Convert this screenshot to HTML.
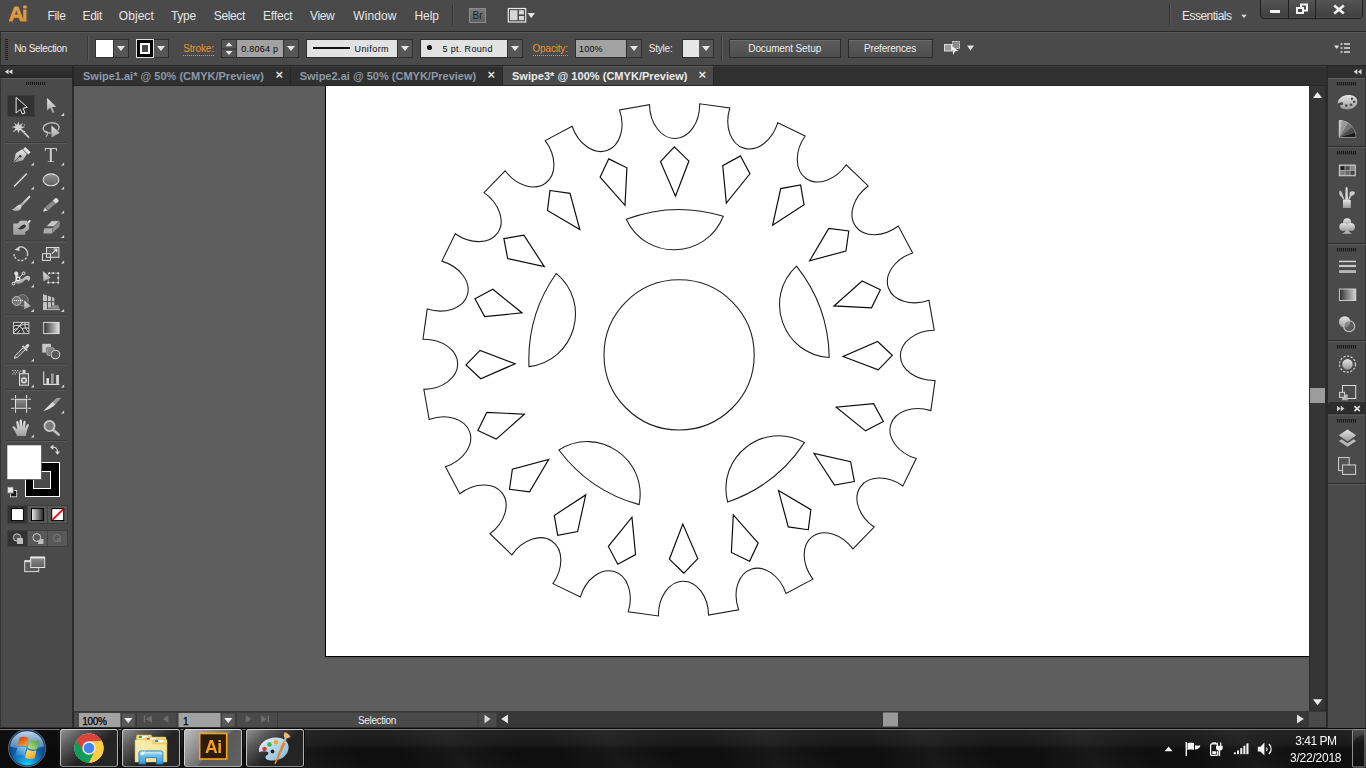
<!DOCTYPE html>
<html lang="en"><head><meta charset="utf-8"><title>Swipe3* @ 100% (CMYK/Preview) - Adobe Illustrator</title>
<style>

*{box-sizing:border-box;margin:0;padding:0}
html,body{width:1366px;height:768px;overflow:hidden;background:#4a4a4a;font-family:"Liberation Sans",sans-serif;}
#app{position:relative;width:1366px;height:768px;overflow:hidden;background:#4a4a4a;color:#dcdcdc;font-size:12px}
.abs{position:absolute}
.t{position:absolute;white-space:nowrap;line-height:1}
#menubar{position:absolute;left:0;top:0;width:1366px;height:31px;background:#4a4a4a}
#menubar .m{font-size:12px;color:#e6e6e6}
#ctrl{position:absolute;left:0;top:31px;width:1366px;height:35px;background:#4a4a4a;border-top:1px solid #282828;border-bottom:1px solid #262626;box-shadow:inset 0 1px 0 #5a5a5a}
#ctrl .t{font-size:10px;color:#ececec}
#ctrl .o{color:#ea962c;border-bottom:1px dotted #ea962c;padding-bottom:1px}
.dd{position:absolute;top:7px;height:19px;width:15px;background:#565656;border:1px solid #2e2e2e;border-left:none}
.dd:after{content:"";position:absolute;left:3px;top:6px;border:4px solid transparent;border-top:5px solid #e4e4e4;border-bottom:none}
.fld{position:absolute;top:7px;height:19px;border:1px solid #2e2e2e;background:#a2a2a2}
.btn{position:absolute;top:7px;height:19px;border:1px solid #2c2c2c;background:linear-gradient(#5c5c5c,#4e4e4e);box-shadow:inset 0 1px 0 #6c6c6c}
#tabs{position:absolute;left:0;top:66px;width:1366px;height:20px;background:#303030;border-bottom:1px solid #262626;box-shadow:inset 0 1px 0 #3d3d3d}
.tab{position:absolute;top:0;height:19px;background:#303030;border-top:1px solid #3d3d3d;border-right:1px solid #262626;font-size:11px;font-weight:bold;color:#8d99a9}
.tab.act{background:#4a4a4a;border-top-color:#5a5a5a;color:#ececec}
#tools{position:absolute;left:0;top:86px;width:74px;height:642px;border-bottom:1px solid #2c2c2c;background:#4a4a4a;border-right:2px solid #2c2c2c;border-left:1px solid #333}
#canvas{position:absolute;left:74px;top:86px;width:1235px;height:625px;background:#5e5e5e;overflow:hidden}
#vscroll{position:absolute;left:1309px;top:86px;width:17px;height:625px;background:#353535;border-right:1px solid #2c2c2c;border-left:1px solid #2a2a2a}
#right{position:absolute;left:1326px;top:66px;width:40px;height:662px;background:#4a4a4a}
#status{position:absolute;left:74px;top:711px;width:1252px;height:17px;background:#4a4a4a}
#taskbar{position:absolute;left:0;top:728px;width:1366px;height:40px;background:repeating-linear-gradient(62deg,rgba(255,255,255,.04) -10px,rgba(255,255,255,.02) 15px,rgba(255,255,255,0) 45px,rgba(255,255,255,0) 80px,rgba(255,255,255,.04) 130px),linear-gradient(#222 0,#1a1a1a 40%,#0e0e0e 55%,#101010 100%)}

</style></head>
<body>
<div id="app">

<div id="menubar">
<span class="t" style="left:8.8px;top:3px;letter-spacing:-1.700px;font-size:21px;font-weight:bold;background:linear-gradient(#d6a660 20%,#ea9226 85%);-webkit-background-clip:text;background-clip:text;color:transparent;-webkit-text-stroke:.55px #dd9a40">Ai</span>
<span class="t m" style="left:47.5px;top:10px;letter-spacing:-0.336px;">File</span>
<span class="t m" style="left:82.5px;top:10px;letter-spacing:-0.297px;">Edit</span>
<span class="t m" style="left:118.8px;top:10px;letter-spacing:0.052px;">Object</span>
<span class="t m" style="left:171px;top:10px;letter-spacing:-0.304px;">Type</span>
<span class="t m" style="left:213.8px;top:10px;letter-spacing:-0.360px;">Select</span>
<span class="t m" style="left:263px;top:10px;letter-spacing:-0.161px;">Effect</span>
<span class="t m" style="left:310px;top:10px;letter-spacing:-0.374px;">View</span>
<span class="t m" style="left:353.3px;top:10px;letter-spacing:0.085px;">Window</span>
<span class="t m" style="left:414.5px;top:10px;letter-spacing:-0.097px;">Help</span>
<div class="abs" style="left:452px;top:5px;width:2px;height:20px;background:#343434;border-right:1px solid #585858"></div>
<div class="abs" style="left:469px;top:8px;width:17px;height:15px;background:linear-gradient(#7c7c7c,#5e5e5e);border:1px solid #8c8c8c"><span class="t" style="left:2.5px;top:2px;letter-spacing:0.000px;font-size:10px;color:#222">Br</span></div>
<svg class="abs" style="left:507px;top:7px" width="30" height="17" viewBox="0 0 30 17"><rect x="1.300" y="1.500" width="17.400" height="13.500" fill="#4a4a4a" stroke="#e8e8e8" stroke-width="1.200"/><rect x="3" y="3.200" width="7.500" height="10" fill="#d8d8d8"/><rect x="12" y="3.200" width="5" height="4.200" fill="#d8d8d8"/><rect x="12" y="9" width="5" height="4.200" fill="#d8d8d8"/><path d="M20.500 6h7.400l-3.700 5z" fill="#e8e8e8"/></svg>
<div class="abs" style="left:1169px;top:4px;width:2px;height:21px;background:#343434;border-right:1px solid #585858"></div>
<span class="t m" style="left:1182px;top:9.5px;letter-spacing:-0.520px;">Essentials</span>
<svg class="abs" style="left:1240px;top:14px" width="8" height="5"><path d="M1.300 .8h5.400l-2.700 3.200z" fill="#dcdcdc"/></svg>
<div class="abs" style="left:1260px;top:-1px;width:103px;height:20px;background:linear-gradient(#545454,#3e3e3e);border:1px solid #1e1e1e;border-radius:0 0 4px 4px;box-shadow:inset 0 -1px 0 #4e4e4e"></div>
<div class="abs" style="left:1288px;top:0;width:1px;height:18px;background:#222"></div>
<div class="abs" style="left:1315px;top:0;width:1px;height:18px;background:#222"></div>
<div class="abs" style="left:1270px;top:10px;width:10px;height:3px;background:#f2f2f2"></div>
<svg class="abs" style="left:1295px;top:3px" width="14" height="12" viewBox="1295 3 14 12"><rect x="1301" y="4.500" width="6" height="6" fill="none" stroke="#f2f2f2" stroke-width="2"/><rect x="1297" y="8" width="6" height="5" fill="#464646" stroke="#f2f2f2" stroke-width="2"/></svg>
<svg class="abs" style="left:1332px;top:4px" width="14" height="11" viewBox="0 0 14 11"><path d="M2.200 1.500l9.600 8M11.800 1.500l-9.600 8" stroke="#f2f2f2" stroke-width="2.600" fill="none"/></svg>
</div>


<div id="ctrl"><div class="abs" style="left:0;top:0;width:1px;height:33px;background:#2e2e2e"></div>
<div class="abs" style="left:5px;top:7px;width:3px;height:21px;background:repeating-linear-gradient(#1e1e1e 0,#1e1e1e 1px,transparent 1px,transparent 2px)"></div>
<span class="t" style="left:14.2px;top:12px;letter-spacing:-0.325px;">No Selection</span>
<div class="abs" style="left:87px;top:4px;width:2px;height:25px;background:#3a3a3a;border-right:1px solid #5a5a5a"></div>
<div class="abs" style="left:95px;top:7px;width:19px;height:19px;background:#fff;border:1px solid #333"></div>
<div class="dd" style="left:114px"></div>
<div class="abs" style="left:136px;top:7px;width:18px;height:19px;background:#000;border:1px solid #e0e0e0"><div class="abs" style="left:3px;top:3px;width:10px;height:11px;border:2px solid #fff;background:#4a4a4a"></div></div>
<div class="dd" style="left:154px"></div>
<span class="t o" style="left:183.2px;top:12px;letter-spacing:-0.155px;">Stroke:</span>
<div class="abs" style="left:221px;top:7px;width:16px;height:19px;background:#565656;border:1px solid #2e2e2e"></div>
<svg class="abs" style="left:221px;top:7.500px" width="16" height="18"><path d="M4.600 6.300L8 2.300l3.400 4zM4.600 11L8 15l3.400-4z" fill="#e8e8e8"/><path d="M1 9h14" stroke="#2e2e2e" stroke-width=".9"/></svg>
<div class="fld" style="left:236px;width:48px"><span class="t" style="left:4.3px;top:4.5px;letter-spacing:0.244px;color:#0a0a0a;font-size:9px">0.8064 p</span></div>
<div class="dd" style="left:284px"></div>
<div class="fld" style="left:306px;width:92px;background:#e2e2e2"><div class="abs" style="left:6px;top:7px;width:37px;height:2px;background:#111"></div><span class="t" style="left:47.5px;top:4.5px;letter-spacing:0.426px;color:#0a0a0a;font-size:9px">Uniform</span></div>
<div class="dd" style="left:398px"></div>
<div class="fld" style="left:420px;width:88px;background:#e2e2e2"><div class="abs" style="left:6px;top:5px;width:5px;height:5px;border-radius:50%;background:#111"></div><span class="t" style="left:21.5px;top:4.5px;letter-spacing:0.341px;color:#0a0a0a;font-size:9px">5 pt. Round</span></div>
<div class="dd" style="left:508px"></div>
<span class="t o" style="left:532.5px;top:12px;letter-spacing:-0.173px;">Opacity:</span>
<div class="fld" style="left:575px;width:52px"><span class="t" style="left:3px;top:4.5px;letter-spacing:0.192px;color:#0a0a0a;font-size:9px">100%</span></div>
<div class="dd" style="left:627px"></div>
<span class="t" style="left:648.8px;top:12px;letter-spacing:-0.219px;">Style:</span>
<div class="abs" style="left:682px;top:7px;width:18px;height:19px;background:#e6e6e6;border:1px solid #2e2e2e"></div>
<div class="dd" style="left:699px"></div>
<div class="abs" style="left:721px;top:4px;width:2px;height:25px;background:#3a3a3a;border-right:1px solid #5a5a5a"></div>
<div class="btn" style="left:729px;width:112px"><span class="t" style="left:18.3px;top:4px;letter-spacing:-0.121px;">Document Setup</span></div>
<div class="btn" style="left:848px;width:85px"><span class="t" style="left:15px;top:4px;letter-spacing:-0.175px;">Preferences</span></div>
<svg class="abs" style="left:943px;top:8px" width="32" height="18" viewBox="0 0 32 18"><rect x="1.500" y="4.500" width="7" height="6.500" fill="#9a9a9a" stroke="#dcdcdc"/><rect x="9.500" y="1.500" width="7" height="7" fill="#8a8a8a" stroke="#dcdcdc" stroke-dasharray="2 1"/><path d="M8 5.500l7.500 5.500-3.600.3L10.500 15z" fill="#eee"/><path d="M24 5.500h7l-3.500 5z" fill="#e4e4e4"/></svg>
<svg class="abs" style="left:1334px;top:10px" width="17" height="12" viewBox="0 0 17 12"><path d="M0 3.500h5.400l-2.700 3.500z" fill="#dcdcdc"/><path d="M6.500 2h2M6.500 6h2M6.500 10h2M10 2h6M10 6h6M10 10h6" stroke="#dcdcdc" stroke-width="1.500"/></svg>
</div>


<div id="tabs">
<div class="abs" style="left:0;top:0;width:72px;height:11px;background:linear-gradient(#343434,#2a2a2a)"></div>
<svg class="abs" style="left:4px;top:3px" width="10" height="8"><path d="M4.600 .3v5L.9 2.800zM8.400 .3v5L4.700 2.800z" fill="#dcdcdc"/></svg>
<div class="abs" style="left:0;top:11px;width:72px;height:1px;background:#242424"></div><div class="abs" style="left:0;top:12px;width:72px;height:8px;background:#4a4a4a;border-top:1px solid #5c5c5c;border-left:1px solid #333"></div>
<div class="abs" style="left:26px;top:16px;width:20px;height:3px;background:repeating-linear-gradient(90deg,#161616 0,#161616 1px,transparent 1px,transparent 2px)"></div>
<div class="abs" style="left:72px;top:0;width:2px;height:20px;background:#262626"></div>
<div class="tab" style="left:74px;width:217px"><span class="t" style="left:9px;top:4px;letter-spacing:0.004px;">Swipe1.ai* @ 50% (CMYK/Preview)</span><span class="t" style="left:201.5px;top:0.5px;color:#dedede;font-weight:bold;font-size:13px">×</span></div>
<div class="tab" style="left:291px;width:212px"><span class="t" style="left:8.7px;top:4px;letter-spacing:0.003px;">Swipe2.ai @ 50% (CMYK/Preview)</span><span class="t" style="left:196.5px;top:0.5px;color:#dedede;font-weight:bold;font-size:13px">×</span></div>
<div class="tab act" style="left:503px;width:211px"><span class="t" style="left:9px;top:4px;letter-spacing:0.032px;">Swipe3* @ 100% (CMYK/Preview)</span><span class="t" style="left:195.5px;top:0.5px;color:#e4e4e4;font-weight:bold;font-size:13px">×</span></div>
</div>

<div id="tools"><div class="abs" style="left:-1px;top:0">
<svg class="abs" style="left:0;top:0" width="73" height="642" viewBox="0 86 73 642">
<defs>
<linearGradient id="ig" x1="0" y1="0" x2="0" y2="1"><stop offset="0" stop-color="#ececec"/><stop offset="1" stop-color="#9c9c9c"/></linearGradient>
<linearGradient id="bb" x1="0" y1="0" x2="0" y2="1"><stop offset="0" stop-color="#c0c0c0"/><stop offset="1" stop-color="#9a9a9a"/></linearGradient><linearGradient id="ig2" x1="0" y1="0" x2="0" y2="1"><stop offset="0" stop-color="#8e8e8e"/><stop offset="1" stop-color="#606060"/></linearGradient>
<linearGradient id="hg" x1="0" y1="0" x2="1" y2="0"><stop offset="0" stop-color="#303030"/><stop offset="1" stop-color="#e2e2e2"/></linearGradient>
<linearGradient id="hg2" x1="0" y1="0" x2="1" y2="0"><stop offset="0" stop-color="#f0f0f0"/><stop offset="1" stop-color="#222"/></linearGradient>
</defs>
<!-- selection (active) -->
<rect x="7" y="95" width="28" height="22" fill="#323232"/><rect x="7.500" y="95.500" width="27" height="21" fill="none" stroke="#3e3e3e"/>
<path d="M16.100 97.400V113l4.200-3.600 2.100 4.600 2.600-1-1.900-4.700 4.200-1z" fill="#2c2c2c" stroke="#ececec" stroke-width="1" stroke-linejoin="miter"/>
<!-- direct selection -->
<path d="M47.100 97.900v12.500l3.200-2.600 2.300 5.200 1.800-.8-2.300-4.900 4.150-.55z" fill="url(#ig)"/>
<path d="M60.99999999999999 115.9H64.1V112.80000000000001z" fill="#d6d6d6"/>
<!-- magic wand -->
<path d="M18.400 121.600l1.200 3.600 3.300-2.600-1.700 3.600 4.100.9-4 1.300 1.800 3.500-3.300-2-1.400 3.300-1.300-3.400-3.400 2 1.900-3.500-3.900-1.200 4-1.100-1.900-3.500 3.400 2.400z" fill="#d0d0d0"/>
<path d="M13.300 131.300h1M23.800 125h1M24 131.500h1" stroke="#d8d8d8" stroke-width="1"/>
<path d="M22 130.400l6.500 6.800" stroke="#c4c4c4" stroke-width="1.800" stroke-linecap="round"/>
<!-- lasso -->
<ellipse cx="51.100" cy="127.900" rx="8" ry="5.100" fill="none" stroke="#bcbcbc" stroke-width="1.400" transform="rotate(-6 51.1 127.9)"/>
<path d="M44 131.700c1.600-.8 3.600 0 3.600 1.500 0 1.700-1.300 2-1.300 3.500" fill="none" stroke="#bcbcbc" stroke-width="1.200"/>
<path d="M51.100 124.900v13.100l9.100-5z" fill="url(#ig)" stroke="#3c3c3c" stroke-width=".5"/>
<path d="M6 142.5H66" stroke="#3b3b3b"/><path d="M6 143.5H66" stroke="#5a5a5a"/>
<!-- pen -->
<path d="M13.500 162.600l2.300-9.300 6.400-4 4.600 4.700-3.800 6.300z" fill="url(#ig)"/>
<path d="M13.800 162.200l6-5.700" stroke="#444" stroke-width=".9"/>
<circle cx="20.200" cy="156.200" r="1.300" fill="#3a3a3a"/>
<path d="M25.300 147l5.300 5.300-2.300 2.300-5.300-5.300z" fill="#e2e2e2"/>
<path d="M30.799999999999997 165.6H33.9V162.5z" fill="#d6d6d6"/>
<!-- type -->
<text x="44.600" y="162" font-family="Liberation Serif,serif" font-size="20.800" fill="#d0d0d0" opacity=".98">T</text>
<path d="M60.99999999999999 165.6H64.1V162.5z" fill="#d6d6d6"/>
<!-- line -->
<path d="M14.100 186.400L26.900 173.400" stroke="#dedede" stroke-width="1.400"/>
<path d="M30.799999999999997 189.5H33.9V186.4z" fill="#d6d6d6"/>
<!-- ellipse -->
<ellipse cx="51" cy="179.800" rx="7.900" ry="5.900" fill="url(#ig2)" stroke="#dedede" stroke-width="1.100"/>
<path d="M60.99999999999999 189.5H64.1V186.4z" fill="#d6d6d6"/>
<!-- paintbrush -->
<path d="M29.300 195.600l1.300 1.100-9 10-1.900-1.700z" fill="url(#ig)"/>
<path d="M11.800 209.500c2.800-.4 4-3.300 6.800-4.500 1.500-.5 2.700.5 2.800 1.800.1 2.300-1.800 4-4.300 4.200-2 .2-4-.5-5.300-1.500z" fill="url(#ig)"/>
<!-- pencil -->
<path d="M43 211.800l4.850-1.260-2.860-3.340z" fill="#dcdcdc"/>
<path d="M47.850 210.540l7.610-6.500-2.860-3.340-7.610 6.500z" fill="#8a8a8a"/>
<path d="M55.460 204.040l2.700-2.300c1.300-1.300-1.400-4.500-2.900-3.400l-2.660 2.360z" fill="#dcdcdc"/>
<path d="M47.850 210.540l-2.860-3.340M55.460 204.040l-2.860-3.340" stroke="#3c3c3c" stroke-width=".5"/>
<path d="M60.99999999999999 213.5H64.1V210.4z" fill="#d6d6d6"/>
<!-- blob brush -->
<path d="M13 223.300h4.400l3.100-2.800h6.300l2.500 4v5l-3.800 2.500v3.100H13z" fill="url(#bb)" stroke="#3a3a3a" stroke-width=".4"/>
<path d="M17.300 228.600c1.500-.3 2.500-1.600 4-2.700 1.600-1.100 3.600-1.500 5.300-1.300-.3 2-1.800 3.700-4 4.500-1.800.6-3.800.3-5.300-.5z" fill="#353535"/>
<path d="M25 224.700l4.600-4.900 1.400 1.200-4.500 5z" fill="#dcdcdc"/><path d="M26.200 223.400l1.400 1.200M27.300 222.200l1.400 1.200" stroke="#5a5a5a" stroke-width=".6"/>
<!-- eraser -->
<path d="M46.100 226.600l5.700-5.800h7.800l-5.700 5.800z" fill="#c6c6c6" stroke="#3a3a3a" stroke-width=".4"/>
<path d="M44.200 228.200h8.500l-.8 5.400h-7.500c-.6 0-1-.5-.9-1.100z" fill="#acacac"/>
<path d="M53 227.600l6.900-6.400-.3 5.200-7.500 6.900z" fill="#8e8e8e"/>
<path d="M60.99999999999999 238H64.1V234.9z" fill="#d6d6d6"/>
<path d="M6 241.0H66" stroke="#3b3b3b"/><path d="M6 242.0H66" stroke="#5a5a5a"/>
<!-- rotate -->
<path d="M18.500 247.400a6.800 6.800 0 0 1 9.100 6.400" fill="none" stroke="#d4d4d4" stroke-width="1.300"/>
<path d="M27.600 253.800a6.800 6.800 0 0 1-13.200 2.300" fill="none" stroke="#d4d4d4" stroke-width="1.300" stroke-dasharray="2.200 1.700"/>
<path d="M14.400 256.100a6.800 6.800 0 0 1-.2-4" fill="none" stroke="#d4d4d4" stroke-width="1.300" stroke-dasharray="2.200 1.700"/>
<path d="M14.600 249.700l4.700-3.300.3 4.500z" fill="#d4d4d4"/>
<path d="M30.799999999999997 263.5H33.9V260.4z" fill="#d6d6d6"/>
<!-- scale -->
<rect x="46.500" y="247.500" width="12.400" height="9.800" fill="#5a5a5a" stroke="#dcdcdc"/>
<rect x="42.500" y="253.700" width="8" height="6.700" fill="none" stroke="#dcdcdc"/>
<path d="M52 253.600l4.600-4.400M53.500 249h3.300v3.300" fill="none" stroke="#e4e4e4" stroke-width="1.100"/>
<path d="M60.99999999999999 263.5H64.1V260.4z" fill="#d6d6d6"/>
<!-- width tool -->
<path d="M14 273.200c1.600-3.200 5.200-1.500 4.200 1.800-1 3 0 5.200 3 4.200 3-1 5-5 8-3 2 2 .4 5-1.200 5.200.2-2.200-1.800-2.400-4-.4-3 3-7 4-10 1 2-2.200 2-5.800 0-8.800z" fill="url(#ig)"/>
<path d="M13.400 283.600l10.200-10.300" stroke="#f0f0f0" stroke-width="1"/>
<circle cx="13.400" cy="283.600" r="1.300" fill="#4a4a4a" stroke="#f0f0f0"/><circle cx="23.600" cy="273.300" r="1.300" fill="#4a4a4a" stroke="#f0f0f0"/><circle cx="18.200" cy="279" r="1.800" fill="#4a4a4a" stroke="#f6f6f6" stroke-width="1.200"/>
<path d="M30.799999999999997 287.5H33.9V284.4z" fill="#d6d6d6"/>
<!-- free transform -->
<rect x="48.200" y="273.100" width="10" height="9.600" fill="none" stroke="#c0c0c0" stroke-width=".7"/>
<path d="M52.400 272.200h1.700v1.700h-1.700zM57.400 272.200h1.700v1.700h-1.700zM57.400 277h1.700v1.700h-1.700zM57.400 281.800h1.700v1.700h-1.700zM52.400 281.800h1.700v1.700h-1.700zM47.400 281.800h1.700v1.700h-1.700zM48.600 272.200h1.300v1.700h-1.300z" fill="#ececec"/>
<path d="M42.900 270.700v11.200l8.200-4z" fill="url(#ig)" stroke="#3c3c3c" stroke-width=".5"/>
<!-- shape builder -->
<circle cx="22.600" cy="300.300" r="5.600" fill="#5e5e5e" stroke="#8c8c8c"/>
<circle cx="16.600" cy="301" r="4.400" fill="#787878" stroke="#c4c4c4"/>
<path d="M14 300.500h9.200" stroke="#f6f6f6" stroke-width="1.100" stroke-dasharray="1.100 .9"/>
<path d="M23.900 299.700v10.100l7.200-3.500z" fill="url(#ig)" stroke="#3c3c3c" stroke-width=".5"/>
<path d="M30.799999999999997 312H33.9V308.9z" fill="#d6d6d6"/>
<!-- perspective grid -->
<path d="M43 294.200l4.100 1.300v13.600H43zM48 295.800l3.100 1v10.500H48zM52.100 297.100l2.200.7v7.600h-2.200z" fill="#c2c2c2"/>
<path d="M43 301.600h11.300" stroke="#4a4a4a" stroke-width="1"/>
<path d="M52.100 306.100h6.400M48 307.900h11.200M43 309.600h17" stroke="#c2c2c2" stroke-width="1"/>
<path d="M60.99999999999999 312H64.1V308.9z" fill="#d6d6d6"/>
<path d="M6 315.0H66" stroke="#3b3b3b"/><path d="M6 316.0H66" stroke="#5a5a5a"/>
<!-- mesh -->
<rect x="13.500" y="322.400" width="15.400" height="11.200" fill="#3c3c3c" stroke="#cacaca"/>
<path d="M13.800 332.600c2.500-2.200 4-4.600 5.400-6.600 1.300-1.800 2.400-2.800 4-3.400M14 326c2.400-.9 4-.8 5.400 0 2.200 1.300 3.600 3.700 5 7.300M19.400 326.100c2.600-1.500 5-2 9.200-1.700M22 328.700c2-.8 4-.9 6.600-.5M25.200 322.600c-.5 2.300-.3 4.300 1 6.400.8 1.300 1.600 2.400 2.400 3.300M14 329.600c1.200-.6 2.200-.8 3.300-.7M17.600 333.300c.5-1.300 1.200-2.300 2.300-3" fill="none" stroke="#ececec" stroke-width=".9"/>
<!-- gradient -->
<rect x="43.700" y="322.400" width="15.400" height="11.200" fill="url(#hg)" stroke="#dcdcdc"/>
<!-- eyedropper -->
<path d="M14.300 358.200l1-2.700 8-8 2 2-8 8z" fill="#5a5a5a" stroke="#e0e0e0" stroke-width="1"/>
<path d="M21.800 346.500l4.700 4.700 1.300-1.300-4.700-4.700z" fill="#cfcfcf"/>
<path d="M24.500 346.800l2.200-2.200c1.600-1.400 3.400.6 2.200 2l-2.200 2.300z" fill="#dadada"/>
<path d="M30.799999999999997 361.5H33.9V358.4z" fill="#d6d6d6"/>
<!-- blend -->
<rect x="42.200" y="343.800" width="8.800" height="8.800" fill="#c6c6c6"/>
<rect x="46" y="347" width="9" height="9" rx="2.400" fill="#4a4a4a"/><rect x="46.900" y="347.900" width="7.600" height="7.600" rx="1.800" fill="#7e7e7e" stroke="#c4c4c4" stroke-width=".8"/><circle cx="55.400" cy="354.500" r="5.300" fill="#4a4a4a"/>
<circle cx="55.400" cy="354.500" r="4.300" fill="#585858" stroke="#d8d8d8" stroke-width="1.100"/>
<path d="M6 364.1H66" stroke="#3b3b3b"/><path d="M6 365.1H66" stroke="#5a5a5a"/>
<!-- symbol sprayer -->
<rect x="19.500" y="373.700" width="9" height="11.500" fill="#5a5a5a" stroke="#dcdcdc"/>
<circle cx="24" cy="380.300" r="2.300" fill="none" stroke="#dcdcdc" stroke-width="1.600"/>
<rect x="22.400" y="369.800" width="3.200" height="3.400" fill="#cfcfcf"/>
<path d="M12.300 370.500h1.100M14.800 370.500h1.100M17.300 370.500h1.100M19.800 371h1.100M13.500 372.300h1.100M16 372.300h1.100M18.500 372.300h1.100M12.300 374h1.100M14.800 374h1.100" stroke="#dcdcdc" stroke-width="1.100"/>
<path d="M30.799999999999997 387.5H33.9V384.4z" fill="#d6d6d6"/>
<!-- graph -->
<path d="M43.700 371.400v13h15.600" fill="none" stroke="#dcdcdc" stroke-width="1.100"/>
<rect x="46.400" y="378.100" width="2.600" height="5.800" fill="#dcdcdc"/><rect x="51" y="373.500" width="2.700" height="10.400" fill="#9a9a9a"/><rect x="56.200" y="375" width="2.700" height="8.900" fill="#dcdcdc"/>
<path d="M60.99999999999999 387.5H64.1V384.4z" fill="#d6d6d6"/>
<path d="M6 389.5H66" stroke="#3b3b3b"/><path d="M6 390.5H66" stroke="#5a5a5a"/>
<!-- artboard -->
<path d="M15.500 395v3.300M26.600 395v3.300M15.500 409.300v3.500M26.600 409.300v3.500M11 399.300h3.500M27.600 399.300H31M11 408.300h3.500M27.600 408.300H31" stroke="#dcdcdc" stroke-width="1.100"/>
<rect x="15.500" y="399.300" width="11.100" height="9" fill="url(#ig2)" stroke="#e4e4e4"/>
<!-- slice -->
<path d="M43.200 411l9.500-9.300 2.600 2.800c-3 3-7 5.500-12.100 6.500z" fill="#d8d8d8"/>
<path d="M52.700 401.700l3.800-3.800h4.500l-5.700 6.600z" fill="#9a9a9a"/>
<path d="M60.99999999999999 413.5H64.1V410.4z" fill="#d6d6d6"/>
<!-- hand -->
<path d="M17 435.900c-1.200-3.500-2.800-6-4.400-8.200-.6-1.300 1-2 2-1l2.600 2.800-.9-7.200c0-1.500 1.900-1.600 2.200-.2l1 5.400.2-6.800c.1-1.500 2.100-1.500 2.200 0l.3 6.800 1.300-5.800c.4-1.400 2.200-1 2.100.4l-.7 6.300 2-3.900c.7-1.200 2.300-.5 1.900.8-1.300 3.800-2.600 7-2.800 10.600z" fill="url(#ig)"/>
<path d="M30.799999999999997 437.5H33.9V434.4z" fill="#d6d6d6"/>
<!-- zoom -->
<path d="M53.300 429.900l5.300 4.700" stroke="#bcbcbc" stroke-width="2.700" stroke-linecap="round"/>
<circle cx="49.500" cy="426" r="5.100" fill="#7c7c7c" stroke="#cdcdcd" stroke-width="1.700"/>
<path d="M6 440.5H66" stroke="#3b3b3b"/><path d="M6 441.5H66" stroke="#5a5a5a"/>
<!-- fill / stroke -->
<rect x="25.500" y="462.500" width="34" height="34" fill="#000" stroke="#fff" stroke-width="1"/>
<rect x="33.500" y="471.500" width="17" height="17" fill="#4a4a4a" stroke="#fff" stroke-width="1"/>
<rect x="7" y="445" width="34.500" height="34.500" fill="#fff" stroke="#444" stroke-width=".6"/>
<path d="M52.500 447.200c4 0 5 1.500 5 5" fill="none" stroke="#d8d8d8" stroke-width="1.300"/>
<path d="M50 447.200l3.300-2.600v5.200zM57.500 454.700l-2.600-3.300h5.200z" fill="#d8d8d8"/>
<rect x="10.400" y="490.500" width="6.300" height="6.300" fill="#1a1a1a" stroke="#d8d8d8" stroke-width=".9"/>
<rect x="7.200" y="486.900" width="6.300" height="6.300" fill="#e8e8e8" stroke="#555" stroke-width=".9"/>
<!-- color mode buttons -->
<rect x="7.500" y="505.500" width="60" height="18" fill="#585858" stroke="#3e3e3e"/>
<rect x="8" y="506" width="19.500" height="17" fill="#333"/>
<path d="M27.500 506v17M47.500 506v17" stroke="#444"/>
<rect x="11.400" y="508.600" width="12" height="12" fill="#fff" stroke="#000"/>
<rect x="31.500" y="508.600" width="12" height="12" fill="url(#hg2)" stroke="#000"/>
<rect x="51.700" y="508.600" width="12" height="12" fill="#fff" stroke="#000"/>
<path d="M52.400 519.900l10.600-10.600" stroke="#f00" stroke-width="1.800"/>
<!-- draw mode buttons -->
<rect x="7.500" y="530.500" width="60" height="16" fill="#585858" stroke="#3e3e3e"/>
<rect x="8" y="531" width="19.500" height="15" fill="#333"/>
<path d="M27.500 531v15M47.500 531v15" stroke="#444"/>
<circle cx="17" cy="537.500" r="3.700" fill="#555" stroke="#c8c8c8"/><rect x="17" y="538" width="6" height="6" fill="#bdbdbd"/>
<rect x="38" y="539" width="5.500" height="5" fill="#bdbdbd"/><circle cx="36.800" cy="537.500" r="3.900" fill="#5a5a5a" stroke="#d0d0d0"/>
<circle cx="57" cy="538" r="3.600" fill="none" stroke="#7a7a7a"/><rect x="57" y="538" width="4" height="4" fill="#707070"/>
<!-- screen mode -->
<rect x="24.700" y="561" width="14" height="10.600" fill="#5c5c5c" stroke="#dcdcdc"/>
<rect x="24.700" y="560.200" width="14" height="2" fill="#dcdcdc"/>
<rect x="30.700" y="557.300" width="14" height="10.200" fill="url(#ig2)" stroke="#e4e4e4"/>
<rect x="30.700" y="556.500" width="14" height="2" fill="#e4e4e4"/>
</svg>
</div></div>

<div id="canvas">
<div class="abs" style="left:251px;top:-1px;width:985px;height:572px;background:#fff;border:1px solid #000;box-shadow:0 2px 2px -1px rgba(0,0,0,.2)"></div>
<svg class="abs" style="left:0;top:0" width="1235" height="625" viewBox="74 86 1235 625">
<path d="M649.52 104.65 C649.85 123.58 661.34 138.73 675.19 138.48 C689.03 138.24 699.98 122.70 699.65 103.78 L729.83 108.02 C724.29 126.12 730.54 144.08 743.78 148.12 C757.02 152.17 772.24 140.78 777.78 122.68 L805.16 136.04 C794.31 151.54 794.70 170.55 806.04 178.49 C817.38 186.43 835.38 180.30 846.23 164.79 L868.15 185.96 C853.04 197.35 847.54 215.55 855.87 226.61 C864.20 237.67 883.21 237.39 898.33 226.00 L912.63 252.91 C894.73 259.07 883.88 274.68 888.39 287.77 C892.90 300.86 911.06 306.48 928.96 300.31 L934.25 330.32 C915.32 330.65 900.17 342.14 900.42 355.99 C900.66 369.83 916.20 380.78 935.12 380.45 L930.88 410.63 C912.78 405.09 894.82 411.34 890.78 424.58 C886.73 437.82 898.12 453.04 916.22 458.58 L902.86 485.96 C887.36 475.11 868.35 475.50 860.41 486.84 C852.47 498.18 858.60 516.18 874.11 527.03 L852.94 548.95 C841.55 533.84 823.35 528.34 812.29 536.67 C801.23 545.00 801.51 564.01 812.90 579.13 L785.99 593.43 C779.83 575.53 764.22 564.68 751.13 569.19 C738.04 573.70 732.42 591.86 738.59 609.76 L708.58 615.05 C708.25 596.12 696.76 580.97 682.91 581.22 C669.07 581.46 658.12 597.00 658.45 615.92 L628.27 611.68 C633.81 593.58 627.56 575.62 614.32 571.58 C601.08 567.53 585.86 578.92 580.32 597.02 L552.94 583.66 C563.79 568.16 563.40 549.15 552.06 541.21 C540.72 533.27 522.72 539.40 511.87 554.91 L489.95 533.74 C505.06 522.35 510.56 504.15 502.23 493.09 C493.90 482.03 474.89 482.31 459.77 493.70 L445.47 466.79 C463.37 460.63 474.22 445.02 469.71 431.93 C465.20 418.84 447.04 413.22 429.14 419.39 L423.85 389.38 C442.78 389.05 457.93 377.56 457.68 363.71 C457.44 349.87 441.90 338.92 422.98 339.25 L427.22 309.07 C445.32 314.61 463.28 308.36 467.32 295.12 C471.37 281.88 459.98 266.66 441.88 261.12 L455.24 233.74 C470.74 244.59 489.75 244.20 497.69 232.86 C505.63 221.52 499.50 203.52 483.99 192.67 L505.16 170.75 C516.55 185.86 534.75 191.36 545.81 183.03 C556.87 174.70 556.59 155.69 545.20 140.57 L572.11 126.27 C578.27 144.17 593.88 155.02 606.97 150.51 C620.06 146.00 625.68 127.84 619.51 109.94 Z" fill="none" stroke="#1e1e1e" stroke-width="1.080"/>
<circle cx="679.100" cy="354.900" r="75.100" fill="none" stroke="#1e1e1e" stroke-width="1.080"/>
<path d="M626.25 219.24 A150.20 150.20 0 0 1 723.26 216.31 C706.23 259.51 645.86 261.33 626.25 219.24 Z M796.47 266.18 A150.20 150.20 0 0 1 829.23 357.54 C782.88 354.69 762.49 297.84 796.47 266.18 Z M804.42 442.58 A150.20 150.20 0 0 1 727.65 501.97 C716.04 457.01 763.81 420.05 804.42 442.58 Z M639.11 504.64 A150.20 150.20 0 0 1 558.91 449.99 C598.08 425.05 647.99 459.06 639.11 504.64 Z M529.00 366.61 A150.20 150.20 0 0 1 556.19 273.44 C592.02 302.99 575.10 360.97 529.00 366.61 Z" fill="none" stroke="#1e1e1e" stroke-width="1.080"/>
<path d="M674.39 146.95 L688.91 161.03 L675.49 196.14 L660.51 161.67Z M740.49 155.91 L749.94 173.79 L726.33 203.03 L722.74 165.62Z M800.58 184.86 L804.05 204.79 L772.56 225.30 L780.71 188.61Z M848.79 230.96 L845.93 250.98 L809.64 260.76 L828.73 228.39Z M880.39 289.70 L871.49 307.86 L833.95 305.95 L862.11 281.06Z M892.30 355.34 L878.22 369.86 L843.11 356.44 L877.58 341.46Z M883.34 421.44 L865.46 430.89 L836.22 407.28 L873.63 403.69Z M854.39 481.53 L834.46 485.00 L813.95 453.51 L850.64 461.66Z M808.29 529.74 L788.27 526.88 L778.49 490.59 L810.86 509.68Z M749.55 561.34 L731.39 552.44 L733.30 514.90 L758.19 543.06Z M683.91 573.25 L669.39 559.17 L682.81 524.06 L697.79 558.53Z M617.81 564.29 L608.36 546.41 L631.97 517.17 L635.56 554.58Z M557.72 535.34 L554.25 515.41 L585.74 494.90 L577.59 531.59Z M509.51 489.24 L512.37 469.22 L548.66 459.44 L529.57 491.81Z M477.91 430.50 L486.81 412.34 L524.35 414.25 L496.19 439.14Z M466.00 364.86 L480.08 350.34 L515.19 363.76 L480.72 378.74Z M474.96 298.76 L492.84 289.31 L522.08 312.92 L484.67 316.51Z M503.91 238.67 L523.84 235.20 L544.35 266.69 L507.66 258.54Z M550.01 190.46 L570.03 193.32 L579.81 229.61 L547.44 210.52Z M608.75 158.86 L626.91 167.76 L625.00 205.30 L600.11 177.14Z" fill="none" stroke="#0c0c0c" stroke-width="1.180" stroke-linejoin="miter"/>
</svg>
</div>
<div id="vscroll">
<svg class="abs" style="left:-1px;top:0" width="17" height="625"><path d="M3.900 11.900h9.200L8.500 6z" fill="#ececec"/><path d="M3.900 613.200h9.400l-4.700 6z" fill="#ececec"/><rect x="0" y="624.300" width="16" height=".7" fill="#2c2c2c"/><rect x="1" y="302" width="15" height="15" fill="#9c9c9c"/></svg>
</div>

<div id="right">
<svg class="abs" style="left:0;top:0" width="40" height="662" viewBox="1326 66 40 662">
<defs>
<linearGradient id="rg" x1="0" y1="0" x2="0" y2="1"><stop offset="0" stop-color="#e6e6e6"/><stop offset="1" stop-color="#9a9a9a"/></linearGradient>
<linearGradient id="rh" x1="0" y1="0" x2="1" y2="0"><stop offset="0" stop-color="#2c2c2c"/><stop offset="1" stop-color="#d8d8d8"/></linearGradient>
</defs>
<rect x="1326" y="66" width="2" height="662" fill="#2a2a2a"/>
<rect x="1365" y="66" width="1" height="662" fill="#333"/>
<rect x="1328" y="66" width="37" height="12" fill="#2f2f2f"/>
<path d="M1357.300 69v5.400l-3.500-2.700zM1361.500 69v5.400l-3.500-2.700z" fill="#dcdcdc"/>
<path d="M1328 78.500h37" stroke="#5e5e5e"/>
<path d="M1337.400 82v3.400M1339.400 82v3.400M1341.400 82v3.400M1343.400 82v3.400M1345.400 82v3.400M1347.400 82v3.400M1349.400 82v3.400M1351.400 82v3.400M1353.400 82v3.400M1355.400 82v3.400" stroke="#161616" stroke-width="1.100"/>
<!-- color palette -->
<path d="M1337.800 104c-.6-4.500 4-8.400 9.800-8.900 5.500-.4 9.700 2.300 9.700 6.300 0 4.500-4.500 8-10.400 8-4.300 0-6.800-1.800-6.700-3.700.1-1.600 2.500-1.200 2.700-2.800.2-1.400-4.800-.5-5.100 1.100z" fill="url(#rg)"/>
<circle cx="1341.700" cy="103.800" r="1.300" fill="#4a4a4a"/><circle cx="1346.300" cy="105.600" r="1.300" fill="#4a4a4a"/><circle cx="1351" cy="104.800" r="1.300" fill="#4a4a4a"/><circle cx="1354.200" cy="101.800" r="1.300" fill="#4a4a4a"/><circle cx="1352" cy="98.700" r="1.200" fill="#4a4a4a"/>
<!-- color guide -->
<path d="M1339.300 120.500v16.700h16.400c0-9.200-7.200-16.700-16.400-16.700z" fill="#bcbcbc" stroke="#dcdcdc" stroke-width=".9"/>
<path d="M1339.300 137.200l2.600-16.500c2.300.3 4.200 1 6 2z" fill="#9a9a9a"/>
<path d="M1339.300 137.200l8.600-14.200c1.700 1 3.200 2.300 4.400 3.800z" fill="#747474"/>
<path d="M1339.300 137.200l13-10.400c1.300 1.700 2.300 3.600 2.800 5.700z" fill="#4c4c4c"/>
<path d="M1339.300 137.200l15.800-4.700c.4 1.500.6 3 .6 4.700z" fill="#1c1c1c"/>
<path d="M1328 146.5h38" stroke="#2c2c2c" stroke-width="1"/><path d="M1328 147.5h38" stroke="#5c5c5c" stroke-width="1"/>
<path d="M1337.400 151v3.400M1339.400 151v3.400M1341.400 151v3.400M1343.400 151v3.400M1345.400 151v3.400M1347.400 151v3.400M1349.400 151v3.400M1351.400 151v3.400M1353.400 151v3.400M1355.400 151v3.400" stroke="#161616" stroke-width="1.100"/>
<!-- swatches -->
<rect x="1339.300" y="165" width="16" height="10.800" fill="#9c9c9c" stroke="#d4d4d4" stroke-width=".9"/>
<rect x="1340.500" y="166.200" width="4" height="3.700" fill="#1c1c1c"/><rect x="1345.500" y="166.200" width="4" height="3.700" fill="#4c4c4c"/><rect x="1350.500" y="166.200" width="4" height="3.700" fill="#8a8a8a"/>
<rect x="1340.500" y="171" width="4" height="3.700" fill="#7c7c7c"/><rect x="1345.500" y="171" width="4" height="3.700" fill="#6a6a6a"/><rect x="1350.500" y="171" width="4" height="3.700" fill="#444"/>
<!-- brushes -->
<rect x="1343" y="200" width="7.800" height="8" fill="url(#rg)"/>
<path d="M1345.600 188c.3-1.200 1.700-1.200 2 0l.4 12h-2.800z" fill="#d6d6d6"/>
<path d="M1339.500 190.500c1.500 0 3 2.500 3.500 5l1.800 4.500h-1.200l-2.500-3.500c-2-1.500-2.400-4-1.600-6z" fill="#c4c4c4"/>
<path d="M1349.500 193c1-2 4-2.500 5.500-.5 0 2-2 3-3.500 3.200l-2.200 4.300h-1.300l1.600-4.700z" fill="#cdcdcd"/>
<!-- symbols (club) -->
<circle cx="1347.100" cy="222.300" r="4" fill="url(#rg)"/><circle cx="1343.300" cy="227" r="4" fill="url(#rg)"/><circle cx="1350.900" cy="227" r="4" fill="url(#rg)"/>
<path d="M1347.100 225c0 4-1.500 7-5 8.700h10c-3.500-1.700-5-4.700-5-8.700z" fill="#b4b4b4"/>
<path d="M1328 243.5h38" stroke="#2c2c2c" stroke-width="1"/><path d="M1328 244.5h38" stroke="#5c5c5c" stroke-width="1"/>
<path d="M1337.400 248v3.400M1339.400 248v3.400M1341.400 248v3.400M1343.400 248v3.400M1345.400 248v3.400M1347.400 248v3.400M1349.400 248v3.400M1351.400 248v3.400M1353.400 248v3.400M1355.400 248v3.400" stroke="#161616" stroke-width="1.100"/>
<!-- stroke -->
<rect x="1339" y="260.700" width="17" height="1.500" fill="#d4d4d4"/><rect x="1339" y="264.900" width="17" height="2.200" fill="#c8c8c8"/><rect x="1339" y="270.100" width="17" height="2.900" fill="#b4b4b4"/>
<!-- gradient -->
<rect x="1339.400" y="289" width="16.400" height="11.500" fill="url(#rh)" stroke="#d8d8d8" stroke-width=".9"/>
<!-- transparency -->
<circle cx="1344.700" cy="321.900" r="5.700" fill="url(#rg)"/>
<circle cx="1349.200" cy="326.300" r="5.500" fill="#6a6a6a" fill-opacity=".55" stroke="#c8c8c8" stroke-width="1.100"/>
<path d="M1328 340.5h38" stroke="#2c2c2c" stroke-width="1"/><path d="M1328 341.5h38" stroke="#5c5c5c" stroke-width="1"/>
<path d="M1337.400 345v3.400M1339.400 345v3.400M1341.400 345v3.400M1343.400 345v3.400M1345.400 345v3.400M1347.400 345v3.400M1349.400 345v3.400M1351.400 345v3.400M1353.400 345v3.400M1355.400 345v3.400" stroke="#161616" stroke-width="1.100"/>
<!-- appearance -->
<circle cx="1347.500" cy="364.200" r="8" fill="none" stroke="#cfcfcf" stroke-width="1.200" stroke-dasharray="2.200 1.500"/>
<circle cx="1347.500" cy="364.200" r="5.200" fill="url(#rg)"/>
<!-- graphic styles -->
<rect x="1342.500" y="385.500" width="13.200" height="13" fill="none" stroke="#dcdcdc" stroke-width="1"/>
<rect x="1342" y="394.500" width="5.800" height="5.800" fill="#b0b0b0"/>
<rect x="1339.600" y="392.300" width="5" height="5" fill="#5a5a5a" stroke="#d4d4d4" stroke-width="1"/>
<!-- floating header -->
<path d="M1328 414.500v-10c0-1.500 1-2.500 2.500-2.500H1366v12.500z" fill="#2d2d2d"/>
<path d="M1337 405.800v5.600l3.600-2.800zM1340.800 405.800v5.600l3.600-2.800z" fill="#cfcfcf"/>
<path d="M1354.400 406.200l5.400 5M1359.800 406.200l-5.400 5" stroke="#e4e4e4" stroke-width="1.600"/>
<path d="M1328 415h37" stroke="#5e5e5e"/>
<path d="M1337.400 419v3.400M1339.400 419v3.400M1341.400 419v3.400M1343.400 419v3.400M1345.400 419v3.400M1347.400 419v3.400M1349.400 419v3.400M1351.400 419v3.400M1353.400 419v3.400M1355.400 419v3.400" stroke="#161616" stroke-width="1.100"/>
<!-- layers -->
<path d="M1338.800 440.900l2.800-1.700 5.900 4 5.900-4 2.800 1.700-8.700 5.800z" fill="#b8b8b8"/>
<path d="M1338.800 435.200l8.700-5.700 8.700 5.700-8.700 6.200z" fill="url(#rg)"/>
<!-- artboards -->
<rect x="1338.600" y="457.600" width="10.600" height="13" fill="#525252" stroke="#d4d4d4" stroke-width="1"/>
<rect x="1342.600" y="464.900" width="13" height="9.500" fill="#525252" stroke="#d4d4d4" stroke-width="1"/>
<path d="M1328 483.500h38" stroke="#2c2c2c"/><path d="M1328 484.500h38" stroke="#585858"/>
</svg>
</div>

<div id="status">
<svg class="abs" style="left:0;top:0" width="1252" height="17" viewBox="74 711 1252 17">
<defs><linearGradient id="tg" x1="0" y1="0" x2="0" y2="1"><stop offset="0" stop-color="#fff"/><stop offset="1" stop-color="#c8c8c8"/></linearGradient></defs>
<rect x="74" y="711" width="1252" height="1.600" fill="#363636"/>
<rect x="74" y="727" width="1252" height="1" fill="#2e2e2e"/>
<rect x="79" y="713" width="41.300" height="14" fill="#a2a2a2"/>
<rect x="121.400" y="713" width="13.700" height="14" fill="#585858" stroke="#3a3a3a" stroke-width=".8"/>
<path d="M124.300 718h8l-4 5.200z" fill="url(#tg)"/>
<path d="M136.500 712v15M177 712v15M236.500 712v15M277.500 712v15M478 712v15" stroke="#3a3a3a"/>
<path d="M144.500 715.500v7" stroke="#6e6e6e" stroke-width="1.400"/><path d="M151.800 715.300v7.400l-5.800-3.700z" fill="#6e6e6e"/>
<path d="M168.300 715.300v7.400l-5.600-3.700z" fill="#6e6e6e"/>
<rect x="178.600" y="713" width="42" height="14" fill="#a2a2a2"/>
<rect x="221.200" y="713" width="14" height="14" fill="#585858" stroke="#3a3a3a" stroke-width=".8"/>
<path d="M224.300 718h8l-4 5.200z" fill="url(#tg)"/>
<path d="M245.800 715.300v7.400l5.600-3.700z" fill="#6e6e6e"/>
<path d="M261.200 715.300v7.400l5.800-3.700z" fill="#6e6e6e"/><path d="M268.300 715.500v7" stroke="#6e6e6e" stroke-width="1.400"/>
<path d="M484.500 714.800v8.600l6-4.300z" fill="#d8d8d8"/>
<rect x="496.500" y="712" width="812.500" height="15" fill="#383838"/>
<path d="M508 714.500v9l-6.800-4.500z" fill="#e4e4e4"/>
<path d="M1297 714.500v9l6.800-4.500z" fill="#e4e4e4"/>
<rect x="883" y="712.500" width="15" height="14" fill="#9a9a9a"/>
<rect x="1309" y="712" width="16" height="15" fill="#4a4a4a"/>
</svg>
<span class="t" style="left:8.2px;top:5.5px;letter-spacing:-0.270px;font-size:10px;color:#000;-webkit-text-stroke:.25px #000">100%</span><span class="t" style="left:109px;top:5.5px;font-size:10px;color:#000;-webkit-text-stroke:.25px #000">1</span><span class="t" style="left:284px;top:4.5px;letter-spacing:-0.349px;font-size:10px;color:#ececec">Selection</span>
</div>


<div id="taskbar">
<div class="abs" style="left:0;top:0;width:1366px;height:1px;background:#0a0a0a"></div><div class="abs" style="left:0;top:1px;width:1366px;height:1px;background:#767676"></div>

<div class="abs" style="left:60px;top:1px;width:58px;height:38px;border:1px solid;border-color:#d0d0d0 #b0b0b0 #8a8a8a #c0c0c0;border-radius:3px;background:linear-gradient(140deg,#929292 0%,#5e5e5e 22%,#3a3a3a 42%,#232323 56%,#262626 100%);box-shadow:0 0 0 1px #0a0a0a"></div><div class="abs" style="left:122px;top:1px;width:58px;height:38px;border:1px solid;border-color:#d0d0d0 #b0b0b0 #8a8a8a #c0c0c0;border-radius:3px;background:linear-gradient(140deg,#929292 0%,#5e5e5e 22%,#3a3a3a 42%,#232323 56%,#262626 100%);box-shadow:0 0 0 1px #0a0a0a"></div><div class="abs" style="left:184px;top:1px;width:58px;height:38px;border:1px solid;border-color:#dcdcdc #c0c0c0 #a8a8a8 #d0d0d0;border-radius:3px;background:linear-gradient(135deg,#bcbcbc 0%,#929292 30%,#6c6c6c 52%,#5a5a5a 53%,#606060 100%);box-shadow:0 0 0 1px #0a0a0a"></div><div class="abs" style="left:246px;top:1px;width:58px;height:38px;border:1px solid;border-color:#d0d0d0 #b0b0b0 #8a8a8a #c0c0c0;border-radius:3px;background:linear-gradient(140deg,#929292 0%,#5e5e5e 22%,#3a3a3a 42%,#232323 56%,#262626 100%);box-shadow:0 0 0 1px #0a0a0a"></div>
<svg class="abs" style="left:0;top:0" width="1366" height="40" viewBox="0 728 1366 40">
<defs>
<radialGradient id="orb" cx=".5" cy=".55" r=".6"><stop offset="0" stop-color="#1878c0"/><stop offset=".6" stop-color="#0c5a9e"/><stop offset="1" stop-color="#083c74"/></radialGradient>
<radialGradient id="orbg" cx=".5" cy="1" r=".55"><stop offset="0" stop-color="#18dcff" stop-opacity="1"/><stop offset=".5" stop-color="#18b0f0" stop-opacity=".6"/><stop offset="1" stop-color="#18a0e8" stop-opacity="0"/></radialGradient><linearGradient id="gloss" x1="0" y1="0" x2="0" y2="1"><stop offset="0" stop-color="#e8f0f6" stop-opacity=".85"/><stop offset="1" stop-color="#9cc0dc" stop-opacity=".45"/></linearGradient><linearGradient id="fr" x1="0" y1="0" x2=".6" y2="1"><stop offset="0" stop-color="#d4321a"/><stop offset="1" stop-color="#fba21c"/></linearGradient><linearGradient id="fg" x1="0" y1="1" x2="1" y2="0"><stop offset="0" stop-color="#cfe890"/><stop offset="1" stop-color="#3f9a28"/></linearGradient><linearGradient id="fb" x1="0" y1="1" x2="1" y2="0"><stop offset="0" stop-color="#1272c8"/><stop offset="1" stop-color="#9cd2f4"/></linearGradient><linearGradient id="fy" x1="0" y1="0" x2="1" y2="1"><stop offset="0" stop-color="#fee68a"/><stop offset="1" stop-color="#f79a0e"/></linearGradient>
<linearGradient id="fold" x1="0" y1="0" x2="1" y2="1"><stop offset="0" stop-color="#fbeeb2"/><stop offset="1" stop-color="#efd068"/></linearGradient>
<linearGradient id="tray" x1="0" y1="0" x2="0" y2="1"><stop offset="0" stop-color="#a4dcf8"/><stop offset=".5" stop-color="#62b4e6"/><stop offset="1" stop-color="#3a96d8"/></linearGradient>
<linearGradient id="pal" x1="0" y1="0" x2="1" y2="1"><stop offset="0" stop-color="#e8f4fc"/><stop offset="1" stop-color="#7eb6dc"/></linearGradient>
<linearGradient id="sd" x1="0" y1="0" x2="0" y2="1"><stop offset="0" stop-color="#3e3e3e"/><stop offset=".35" stop-color="#181818"/><stop offset="1" stop-color="#111"/></linearGradient>
</defs>
<!-- start orb -->
<rect x="0" y="730" width="58" height="38" fill="#0a0a0a" opacity=".75"/>
<circle cx="27.100" cy="748.200" r="18.500" fill="url(#orb)" stroke="#7a7068" stroke-width=".9"/>
<circle cx="27.100" cy="748.200" r="17.600" fill="url(#orbg)" stroke="#0a3e78" stroke-width=".9"/>
<path d="M10 746.500a17.200 17.200 0 0 1 34.200 0c-5.500 1.800-11 2.300-17.100 2.300s-11.600-.5-17.100-2.300z" fill="url(#gloss)"/>
<path d="M19.500 737.800Q24 735.800 28.700 738L26.900 746.600Q22.500 744.600 17.800 746.300Z" fill="url(#fr)"/>
<path d="M29.500 739.800Q34 742.500 39.100 740.200L37.200 749Q32.500 750.800 27.900 747.800Z" fill="url(#fg)"/>
<path d="M17.300 747.600Q22 745.900 26.300 748L24.600 756Q20 753.800 15.300 756Z" fill="url(#fb)"/>
<path d="M27.300 749.300Q32 752 36.400 750.200L34.600 758.300Q30 760.300 24.900 757.400Z" fill="url(#fy)"/>
<!-- chrome -->
<circle cx="89" cy="748" r="14.600" fill="#fff"/>
<path d="M89 748L76.360 740.700A14.600 14.600 0 0 1 101.640 740.700z" fill="#db4437"/>
<path d="M89 748L101.640 740.700A14.600 14.600 0 0 1 89 762.600z" fill="#ffcd40"/>
<path d="M89 748L89 762.600A14.600 14.600 0 0 1 76.360 740.700z" fill="#0f9d58"/>
<path d="M89 741.400h12.200a14.600 14.600 0 0 0-24.840-.7L82.300 751z" fill="#db4437"/>
<path d="M94.700 751.300L88.600 762.600a14.600 14.600 0 0 0 12.640-21.900L89 741.400z" fill="#ffcd40"/>
<path d="M83.300 751.300L76.360 740.700A14.600 14.600 0 0 0 89 762.600l5.700-11.300z" fill="#0f9d58"/>
<circle cx="89" cy="748" r="6.700" fill="#f4f4f4"/>
<circle cx="89" cy="748" r="5.300" fill="#4285f4"/>
<!-- explorer -->
<path d="M136.400 741v-5c0-.6.400-1 1-1h13.300c.6 0 1 .4 1 1v5z" fill="#f3dc8c" stroke="#d4b45a" stroke-width=".5"/>
<rect x="138.900" y="736" width="3" height="1.900" fill="#16b02e"/><rect x="141.900" y="736" width="6" height="1.900" fill="#fff"/>
<path d="M145.700 743v-5c0-.6.400-1 1-1H165c.6 0 1 .4 1 1v5z" fill="#f3dc8c" stroke="#d4b45a" stroke-width=".5"/>
<rect x="147.100" y="738" width="2.700" height="2" fill="#e03020"/><rect x="149.800" y="738" width="5.800" height="2" fill="#fff"/>
<path d="M135 762.100v-21.400c0-.6.400-1 1-1h15.500l1.800 2.200h12.700c.6 0 1 .4 1 1v19.200z" fill="url(#fold)" stroke="#d8b85c" stroke-width=".5"/>
<path d="M152.800 743.600v-3.200c0-.6.400-1 1-1H166c.6 0 1 .4 1 1v3.200z" fill="#f3dc8c" stroke="#d4b45a" stroke-width=".5"/>
<rect x="155" y="740.100" width="3" height="1.900" fill="#1a8ef0"/><rect x="158" y="740.100" width="5.200" height="1.900" fill="#fff"/>
<path d="M136.400 761.500v-18.300h15.600l1.600 2h12.200v16.300z" fill="#fbeeb0" opacity=".55"/>
<path d="M138.900 764v-11.300c0-1 .800-1.800 1.800-1.800h20.400c1 0 1.800.8 1.800 1.800V764h-6.500v-6.300h-10.700v6.300z" fill="url(#tray)" stroke="#1878c4" stroke-width=".8"/>
<path d="M140.200 755.500c0-2 1-3.200 3-3.200h16c2 0 2.700 1 2.700 2.200-1.500-.8-3-.9-5-.9h-13.700c-1.500 0-2.500.6-3 1.900z" fill="#d8f0fc" opacity=".8"/>
<path d="M142.400 746.500v6M140 753.500h5M144 752l2.500-3.200" stroke="#fff" stroke-width=".5" opacity=".8"/><circle cx="142.500" cy="753.500" r="1.500" fill="#fff" opacity=".8"/>
<!-- Ai icon -->
<rect x="199.700" y="733.500" width="27" height="25.500" fill="#2b1d09" stroke="#f9a31c" stroke-width="1.600"/>
<!-- paint -->
<path d="M259 752c-1-8 7-14.500 17-14.500 8 0 13 4.500 12.600 10.500-.5 7-7 12.500-16.500 12.500-4.500 0-7-1.600-6.600-3.800.4-1.800 3-1.700 3-3.500 0-2-4.500-2.700-9.500-1.200z" fill="url(#pal)"/>
<circle cx="264.500" cy="749" r="2.300" fill="#e0392c"/><circle cx="269.500" cy="744.500" r="2.300" fill="#3eb34a"/><circle cx="276" cy="742.300" r="2.300" fill="#f5a623"/><circle cx="272.500" cy="751.500" r="1.900" fill="#222"/>
<path d="M274.300 763.500l8.600-21.500 2.600 1.200-9.800 21z" fill="#e8821e"/>
<path d="M283 741.800l1.700-4.300 2 .9-1.300 4.500z" fill="#b0b0b0"/>
<path d="M284.400 737.800c-1-2.400-.8-4 .3-5.500 2 .5 4.800 2.300 5.800 4.500-1.500 1-3.300 1.700-4.300 1.800z" fill="#e2b87a"/>
<!-- tray -->
<path d="M1164.600 751.300h8l-4-4.700z" fill="#f0f0f0"/>
<path d="M1186.300 742v14" stroke="#f6f6f6" stroke-width="1.400"/>
<path d="M1187.500 743.200c2.200-.5 4.300-.5 6.500 0v6.800c-2.200-.6-4.300-.6-6.500 0z" fill="#f6f6f6"/>
<path d="M1195 745.300c1.800.5 3.500.5 5.300 0-.2 2.600-2.300 4.200-5.300 4.300z" fill="#f6f6f6"/>
<rect x="1210.600" y="743.800" width="7" height="11.600" rx="1.200" fill="none" stroke="#f4f4f4" stroke-width="1.300"/>
<rect x="1212.200" y="742.300" width="3.800" height="1.600" fill="#f4f4f4"/>
<rect x="1212.300" y="751.200" width="4" height="2.900" fill="#f4f4f4"/>
<path d="M1215.300 745h8.200v6.200h-8.200z" fill="#151515"/>
<path d="M1216 745.700h6.700v2.200c0 1.700-1.400 2.800-3.350 2.800s-3.350-1.100-3.350-2.800z" fill="#f8f8f8"/>
<path d="M1217.400 742.400v3.500M1220.700 742.400v3.500" stroke="#f8f8f8" stroke-width="1.200"/>
<path d="M1219.400 750.400v5.600" stroke="#f8f8f8" stroke-width="1.500"/>
<rect x="1233.900" y="752.300" width="1.900" height="1.900" fill="#f6f6f6"/><rect x="1237.100" y="750.400" width="1.900" height="3.800" fill="#f6f6f6"/><rect x="1240.300" y="748" width="2" height="6.200" fill="#f6f6f6"/><rect x="1243.400" y="745.700" width="2" height="8.500" fill="#f6f6f6"/><rect x="1246.400" y="743.400" width="2.100" height="10.800" fill="#f6f6f6"/>
<path d="M1257.800 746.700h2.600l4-4.300v13.200l-4-4h-2.600z" fill="#f4f4f4"/>
<path d="M1266.300 747.600c.9 1 .9 2.500 0 3.500" fill="none" stroke="#e8e8e8" stroke-width="1.100"/>
<path d="M1269 744c2.700 3 2.700 7 0 10" fill="none" stroke="#ececec" stroke-width="1.400"/>
<!-- show desktop -->
<rect x="1352.500" y="729.500" width="12.500" height="37.500" rx="1" fill="url(#sd)" stroke="#8e8e8e" stroke-width="1"/><path d="M1353.500 745c0-6 4-9.500 11-10.500v-4.500h-11z" fill="#fff" opacity=".09"/>
</svg>
<span class="t" style="left:205px;top:11px;font-size:17.500px;font-weight:bold;color:#f9a31c;letter-spacing:-.4px;opacity:.99">Ai</span>
<span class="t" style="left:1295.2px;top:7px;letter-spacing:-0.472px;font-size:12px;color:#fff;opacity:.99">3:41 PM</span><span class="t" style="left:1290px;top:23.5px;letter-spacing:-0.232px;font-size:12px;color:#fff;opacity:.99">3/22/2018</span>
</div>

</div>
</body></html>
